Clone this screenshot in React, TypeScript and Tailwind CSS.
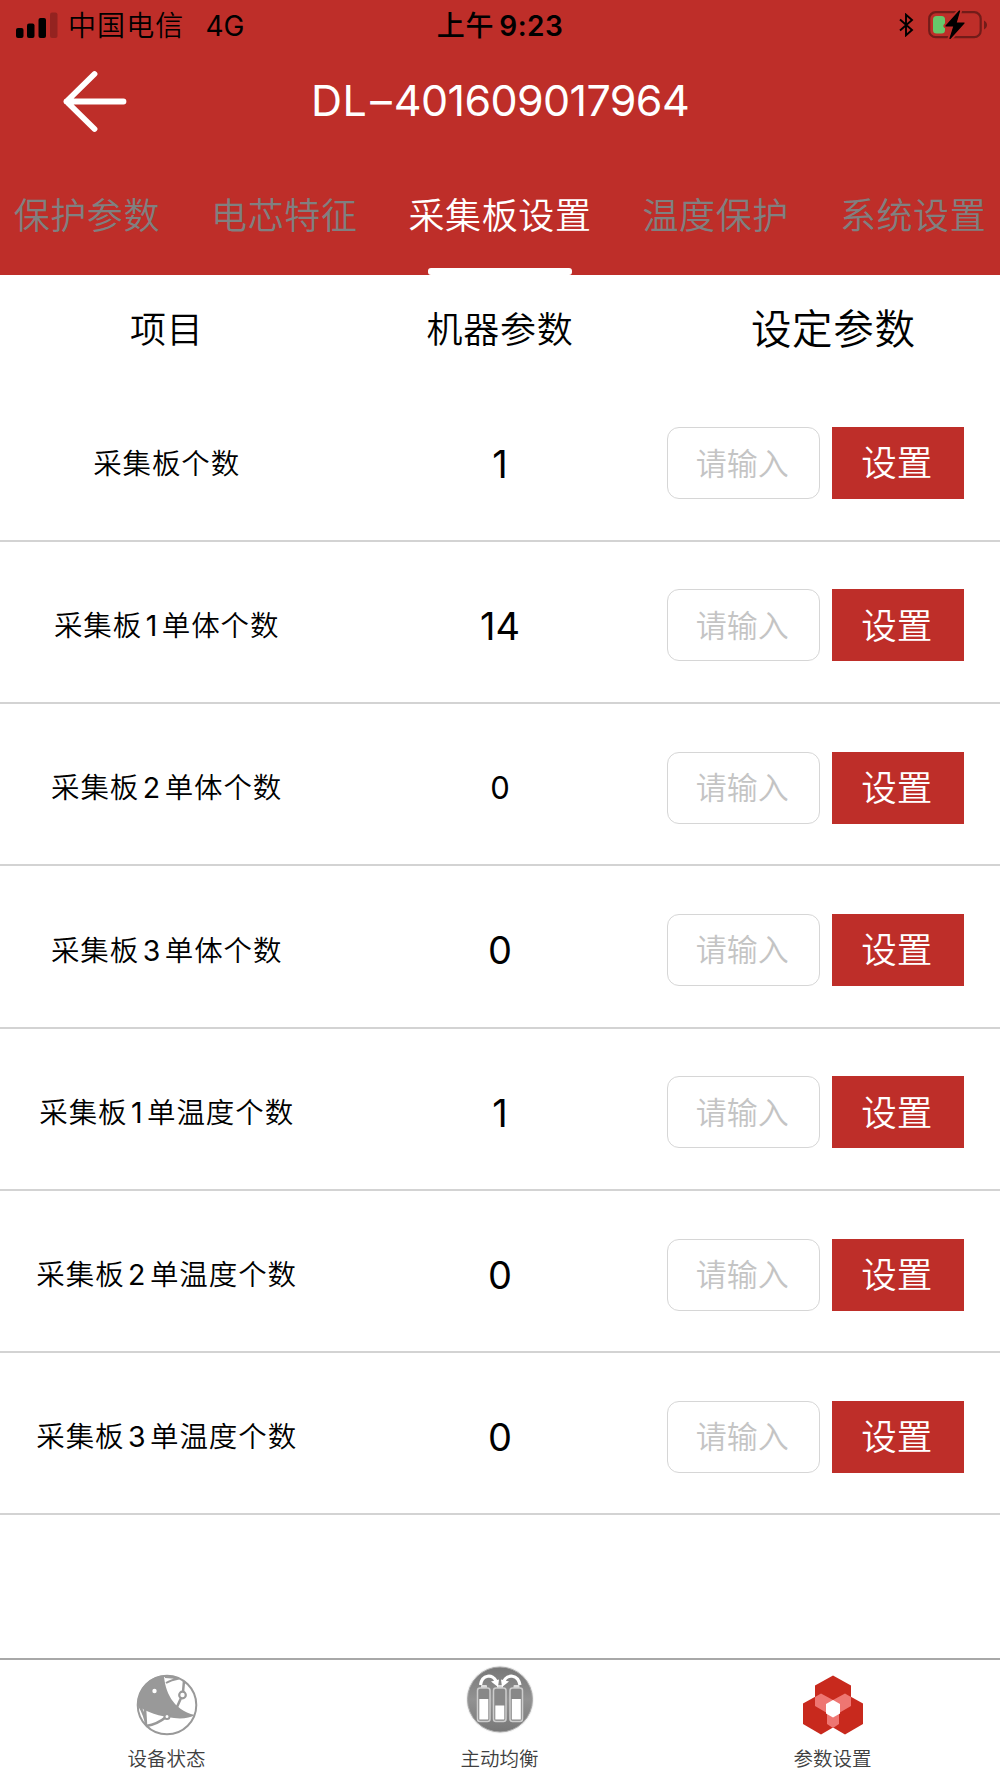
import { useState } from "react";

interface Param {
  label: string;
  value: string;
  small?: boolean;
}

const tabs = ["保护参数", "电芯特征", "采集板设置", "温度保护", "系统设置"];

const params: Param[] = [
  { label: "采集板个数", value: "1" },
  { label: "采集板1单体个数", value: "14" },
  { label: "采集板2单体个数", value: "0", small: true },
  { label: "采集板3单体个数", value: "0" },
  { label: "采集板1单温度个数", value: "1" },
  { label: "采集板2单温度个数", value: "0" },
  { label: "采集板3单温度个数", value: "0" },
];

function SignalIcon() {
  return (
    <svg width="42" height="27" viewBox="0 0 42 27">
      <rect x="0" y="16" width="7.5" height="10" rx="2" />
      <rect x="11" y="11.500" width="7.500" height="14.500" rx="2" />
      <rect x="22.500" y="6" width="7.500" height="20" rx="2" />
      <rect x="34" y="0.500" width="7.500" height="25.500" rx="2" opacity="0.22" />
    </svg>
  );
}

function BluetoothIcon() {
  return (
    <svg width="15" height="24" viewBox="0 0 15 24" fill="none" stroke="#000" strokeWidth="1.900">
      <path d="M1 6.500 L13 17 L7 22.300 V1.700 L13 7 L1 17.500" />
    </svg>
  );
}

function BatteryIcon() {
  return (
    <svg width="60" height="30" viewBox="0 0 60 30">
      <rect x="1.200" y="2.200" width="51.500" height="25" rx="6.500" fill="none" stroke="#721c19" strokeWidth="2.200" />
      <path d="M56 10.500 V19.500 C60 17.500 60 12.500 56 10.500 Z" fill="#721c19" />
      <rect x="5" y="6" width="12" height="17.500" rx="3.500" fill="#67c76b" />
      <path
        d="M31.500 1 L18 16 H26 L22 28.500 L36 13 H28 Z"
        stroke="#be2e29"
        strokeWidth="5"
        strokeLinejoin="round"
      />
      <path d="M31.500 1 L18 16 H26 L22 28.500 L36 13 H28 Z" stroke="#000" strokeWidth="1.200" strokeLinejoin="round" />
    </svg>
  );
}

function BackIcon() {
  return (
    <svg width="66" height="64" viewBox="0 0 66 64" fill="none" stroke="#fff" strokeWidth="5.800" strokeLinecap="round" strokeLinejoin="round">
      <path d="M33.500 5 L5.500 32.500 L33.500 60 M5.500 32.500 H62.500" />
    </svg>
  );
}

function StatusIcon() {
  return (
    <svg width="62" height="62" viewBox="0 0 62 62" fill="none" stroke="#999" strokeWidth="2">
      <circle cx="31" cy="31" r="29.300" />
      <path
        d="M28 1.700 C29 16 36 36 59 41 C54 44 46 45 38 44 C24 42.500 10 38 2 32 C1 14 14 2 28 1.700 Z"
        fill="#999"
        stroke="none"
      />
      <path d="M29 3 L42 4 M30 9 Q35 6 43 4.500" />
      <path d="M48 7 L47 18 M45 24 L41 33" strokeWidth="2.500" />
      <circle cx="46.500" cy="21" r="3.300" strokeWidth="2.200" fill="#fff" />
      <path d="M3 31 Q10 43 10 51 L9 34 M10 52 Q22 50 30 43" strokeWidth="2.500" />
      <circle cx="31" cy="42.500" r="2.500" fill="#fff" />
      <circle cx="18.500" cy="17" r="2.200" fill="#fff" stroke="none" />
    </svg>
  );
}

function BalanceIcon() {
  return (
    <svg width="70" height="70" viewBox="0 0 70 70">
      <defs>
        <linearGradient id="disc" x1="0" y1="0" x2="0" y2="1">
          <stop offset="0" stopColor="#777" />
          <stop offset="0.500" stopColor="#929292" />
          <stop offset="1" stopColor="#777" />
        </linearGradient>
      </defs>
      <circle cx="35" cy="34.500" r="34" fill="#f2f2f2" />
      <circle cx="35" cy="34.500" r="32.500" fill="url(#disc)" stroke="#aaa" />
      {[12.5, 28.5, 45].map((x) => (
        <g key={x}>
          <rect x={x + 3.500} y="20" width="6" height="4" rx="1" fill="#ddd" />
          <rect x={x} y="23" width="12.500" height="33.500" rx="2.500" fill="#888" stroke="#ccc" strokeWidth="1.500" />
          <rect x={x + 1.800} y={x === 28.5 ? 40.5 : 34} width="9" height={x === 28.5 ? 14 : 20.5} fill="#fff" />
        </g>
      ))}
      <path d="M15.500 20 C17 9 28 9 31 16 M55 20 C53 9 42 9 39 16" fill="none" stroke="#fff" strokeWidth="3.200" />
      <path d="M26 16.500 L34 14.500 L33 22 Z M44 16.500 L36 14.500 L37 22 Z" fill="#fff" />
    </svg>
  );
}

function SettingsIcon() {
  return (
    <svg width="62" height="60" viewBox="0 0 62 60">
      <path d="M31 0.500 L49 10.500 V31 L31 41 L13 31 V10.500 Z" fill="#c8291d" />
      <path d="M19 18.500 L37 28.500 V49 L19 59.500 L1 49 V28.500 Z" fill="#c8291d" />
      <path d="M43 18.500 L61 28.500 V49 L43 59.500 L25 49 V28.500 Z" fill="#c8291d" />
      <path d="M13 22 L19 18.500 L31 25 L43 18.500 L49 22 V31 L37 38 V49 L31 53 L25 49 V38 L13 31 Z" fill="#ee7672" />
      <path d="M31 25 L38 29 V38.500 L31 42.500 L24 38.500 V29 Z" fill="#fff" />
    </svg>
  );
}

// digits inside a label get a little air on both sides
function Label({ text }: { text: string }) {
  return (
    <div className="text-[28.500px] font-[350] tracking-[0.900px]">
      {text.split(/(\d)/).map((part, i) =>
        /\d/.test(part) ? (
          <span key={i} className="mr-[4.500px] ml-[3.500px] font-normal tracking-normal">
            {part}
          </span>
        ) : (
          part
        )
      )}
    </div>
  );
}

export default function App() {
  const [activeTab, setActiveTab] = useState("采集板设置");
  const [inputs, setInputs] = useState<Record<string, string>>({});

  return (
    <div className="flex h-[1778px] w-[1000px] flex-col bg-white font-['Inter','Noto_Sans_CJK_SC',sans-serif] text-black">
      <header className="flex h-[275px] flex-col bg-[#be2e29]">
        {/* status bar */}
        <div className="grid h-[50px] grid-cols-3 items-center pl-4 pr-[12px] text-[28px] leading-none">
          <div className="flex items-center">
            <SignalIcon />
            <span className="ml-[10px] pt-[2px] font-[350] tracking-[1.1px]">中国电信</span>
            <span className="ml-[21px] pt-[1px]">4G</span>
          </div>
          <div className="flex justify-center gap-[5px] pt-[2px] pr-[4px] font-semibold">
            <span className="font-medium tracking-[0.8px]">上午</span>
            <span className="tracking-[0.5px]">9:23</span>
          </div>
          <div className="flex items-center justify-end gap-[14px]">
            <BluetoothIcon />
            <BatteryIcon />
          </div>
        </div>

        <div className="grid h-[102px] grid-cols-[200px_1fr_200px] items-center">
          <button className="ml-[61px] w-[66px]">
            <BackIcon />
          </button>
          <h1 className="pb-[2px] text-center text-[43px] leading-none text-white">
            <span className="tracking-[0.5px]">DL</span>
            <span className="mr-[2px] ml-[3px]">–</span>
            <span className="tracking-[-0.6px]">401609017964</span>
          </h1>
        </div>

        <nav className="flex grow justify-center gap-[51px]">
          {tabs.map((tab) => (
            <button
              key={tab}
              onClick={() => setActiveTab(tab)}
              className={`flex flex-col items-center justify-between pt-[38px] text-[36px] leading-[52px] font-[350] tracking-[0.6px] ${
                activeTab === tab ? "text-white" : "text-[#808080]"
              }`}
            >
              {tab}
              {activeTab === tab && <span className="h-[7px] w-36 rounded-[3px] bg-white" />}
            </button>
          ))}
        </nav>
      </header>

      <main className="grow">
        <div className="grid h-[104.400px] grid-cols-3 items-center pt-[6px] text-center text-[36px] font-[350] tracking-[0.7px]">
          <div>项目</div>
          <div>机器参数</div>
          <div className="pt-px text-[40.500px]">设定参数</div>
        </div>

        {params.map((param) => (
          <div
            key={param.label}
            className="grid h-[162.300px] grid-cols-3 items-center border-b-2 border-[#d3d3d3] pt-[7px] text-center"
          >
            <div className="pt-[2px]">
              <Label text={param.label} />
            </div>
            <div className={param.small ? "pt-[2px] text-[31px]" : "pt-[2px] text-[38px]"}>{param.value}</div>
            <div className="flex gap-3">
              <input
                value={inputs[param.label] ?? ""}
                onChange={(e) => setInputs({ ...inputs, [param.label]: e.target.value })}
                placeholder="请输入"
                className="h-[72px] w-[153px] rounded-xl border border-[#d6d6d6] pr-[2px] text-center text-[31px] font-[350] placeholder:text-[#c4c4c4]"
              />
              <button className="h-[72px] w-[132px] bg-[#be2e29] pt-[2px] pr-[2px] text-[35.500px] font-[350] text-white">
                设置
              </button>
            </div>
          </div>
        ))}
      </main>

      <footer className="grid h-[120px] grid-cols-3 border-t-2 border-[#a8a8a8] pr-px text-center text-[19.500px] leading-none font-[350] text-[#404040]">
        <div className="flex flex-col items-center pt-[14px]">
          <StatusIcon />
          <span className="mt-[14px]">设备状态</span>
        </div>
        <div className="flex flex-col items-center pt-[5px]">
          <BalanceIcon />
          <span className="mt-[15px]">主动均衡</span>
        </div>
        <div className="flex flex-col items-center pt-[15px]">
          <SettingsIcon />
          <span className="mt-[15px]">参数设置</span>
        </div>
      </footer>
    </div>
  );
}
